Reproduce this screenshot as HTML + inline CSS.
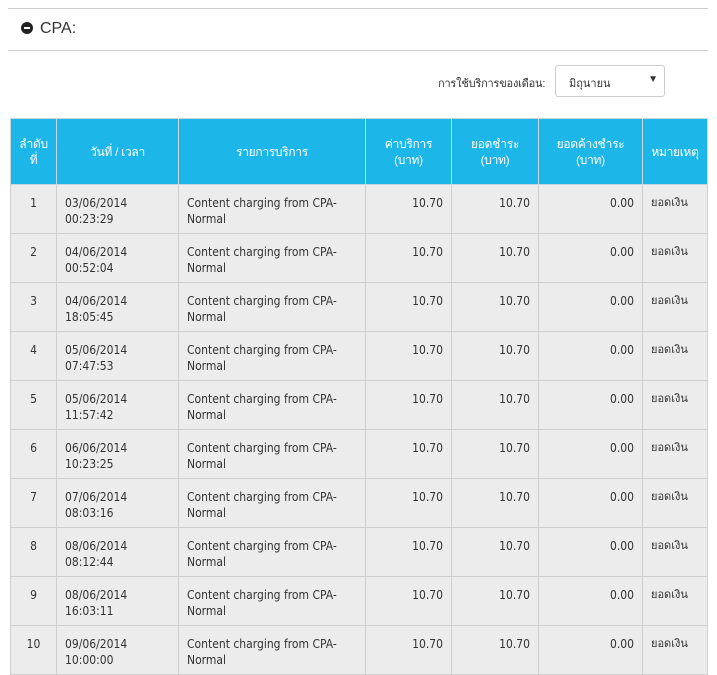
<!DOCTYPE html>
<html><head><meta charset="utf-8"><style>
body{margin:0;width:717px;height:630px;overflow:hidden;background:#fff;font-family:"Liberation Sans","Noto Sans CJK SC",sans-serif;color:#333;position:relative}
.hr{position:absolute;left:8px;width:700px;height:1px;background:#ccc}
.title{position:absolute;left:21px;top:20px;font-size:16px;color:#333}
.title .ic{display:inline-block;width:12px;height:12px;border-radius:50%;background:#222;position:relative;vertical-align:-1px;margin-right:7px}
.title .ic:after{content:"";position:absolute;left:3px;right:3px;top:5px;height:2px;background:#fff}
.lbl{position:absolute;left:438px;top:74px;font-size:11px;color:#333;letter-spacing:-0.2px}
.sel{position:absolute;left:555px;top:65px;width:110px;height:32px;border:1px solid #ccc;border-radius:3px;box-sizing:border-box;font-size:11px}
.sel span{position:absolute;left:13px;top:8px}
.sel i{position:absolute;right:6px;top:8px;font-style:normal;font-size:10px}
table{position:absolute;left:10px;top:118px;border-collapse:collapse;table-layout:fixed;width:697px}
th{background:#1db6e9;color:#fff;font-weight:normal;font-size:12px;height:65px;border:1px solid #c9d6de;padding:0;line-height:16px;letter-spacing:-0.3px}
td{background:#ececec;border:1px solid #cfcfcf;font-size:12px;height:49px;vertical-align:top;padding:10px 8px 0;box-sizing:border-box;line-height:16px;font-family:"DejaVu Sans Condensed","Liberation Sans",sans-serif;color:#333}
td.c{text-align:center}td.r{text-align:right}
td.t{font-size:11px}
</style></head><body>
<div class="hr" style="top:8px"></div>
<div class="title"><span class="ic"></span>CPA:</div>
<div class="hr" style="top:50px"></div>
<div class="lbl">การใช้บริการของเดือน:</div>
<div class="sel"><span>มิถุนายน</span><i>▼</i></div>
<table>
<colgroup><col style="width:46px"><col style="width:122px"><col style="width:187px"><col style="width:86px"><col style="width:87px"><col style="width:104px"><col style="width:65px"></colgroup>
<tr><th>ลำดับ<br>ที่</th><th>วันที่ / เวลา</th><th>รายการบริการ</th><th>ค่าบริการ<br>(บาท)</th><th>ยอดชำระ<br>(บาท)</th><th>ยอดค้างชำระ<br>(บาท)</th><th>หมายเหตุ</th></tr>
<tr><td class="c">1</td><td>03/06/2014<br>00:23:29</td><td>Content charging from CPA-<br>Normal</td><td class="r">10.70</td><td class="r">10.70</td><td class="r">0.00</td><td class="t">ยอดเงิน</td></tr>
<tr><td class="c">2</td><td>04/06/2014<br>00:52:04</td><td>Content charging from CPA-<br>Normal</td><td class="r">10.70</td><td class="r">10.70</td><td class="r">0.00</td><td class="t">ยอดเงิน</td></tr>
<tr><td class="c">3</td><td>04/06/2014<br>18:05:45</td><td>Content charging from CPA-<br>Normal</td><td class="r">10.70</td><td class="r">10.70</td><td class="r">0.00</td><td class="t">ยอดเงิน</td></tr>
<tr><td class="c">4</td><td>05/06/2014<br>07:47:53</td><td>Content charging from CPA-<br>Normal</td><td class="r">10.70</td><td class="r">10.70</td><td class="r">0.00</td><td class="t">ยอดเงิน</td></tr>
<tr><td class="c">5</td><td>05/06/2014<br>11:57:42</td><td>Content charging from CPA-<br>Normal</td><td class="r">10.70</td><td class="r">10.70</td><td class="r">0.00</td><td class="t">ยอดเงิน</td></tr>
<tr><td class="c">6</td><td>06/06/2014<br>10:23:25</td><td>Content charging from CPA-<br>Normal</td><td class="r">10.70</td><td class="r">10.70</td><td class="r">0.00</td><td class="t">ยอดเงิน</td></tr>
<tr><td class="c">7</td><td>07/06/2014<br>08:03:16</td><td>Content charging from CPA-<br>Normal</td><td class="r">10.70</td><td class="r">10.70</td><td class="r">0.00</td><td class="t">ยอดเงิน</td></tr>
<tr><td class="c">8</td><td>08/06/2014<br>08:12:44</td><td>Content charging from CPA-<br>Normal</td><td class="r">10.70</td><td class="r">10.70</td><td class="r">0.00</td><td class="t">ยอดเงิน</td></tr>
<tr><td class="c">9</td><td>08/06/2014<br>16:03:11</td><td>Content charging from CPA-<br>Normal</td><td class="r">10.70</td><td class="r">10.70</td><td class="r">0.00</td><td class="t">ยอดเงิน</td></tr>
<tr><td class="c">10</td><td>09/06/2014<br>10:00:00</td><td>Content charging from CPA-<br>Normal</td><td class="r">10.70</td><td class="r">10.70</td><td class="r">0.00</td><td class="t">ยอดเงิน</td></tr>
</table>
</body></html>
